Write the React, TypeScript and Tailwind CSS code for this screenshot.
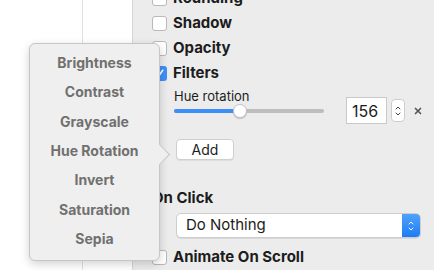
import { ChevronDown, ChevronUp, X } from 'lucide-react';

const filters = ['Brightness', 'Contrast', 'Grayscale', 'Hue Rotation', 'Invert', 'Saturation', 'Sepia'];

const Checkbox = ({ checked = false }: { checked?: boolean }) =>
  checked ? (
    <span className="flex h-[15px] w-[15px] shrink-0 items-center justify-center rounded-[3px] bg-[#3d8ff7]">
      <svg viewBox="0 0 12 12" className="h-[11px] w-[11px]">
        <path d="M2.5 6.5 L5 9 L9.5 2.5" fill="none" stroke="white" strokeWidth="1.8" strokeLinecap="round" strokeLinejoin="round" />
      </svg>
    </span>
  ) : (
    <span className="h-[15px] w-[15px] shrink-0 rounded-[3px] border border-[#b9b9b9] bg-white" />
  );

const CheckRow = ({ label, checked }: { label: string; checked?: boolean }) => (
  <div className="flex h-[25px] items-center gap-[6px]">
    <Checkbox checked={checked} />
    <span className="text-[15px] font-bold text-[#1c1c1c]">{label}</span>
  </div>
);

export default function App() {
  return (
    <div className="relative flex h-[270px] w-[434px] overflow-hidden bg-white font-['Inter',sans-serif]">
      <div className="flex w-[133px] shrink-0 border-r border-[#d6d6d6]">
        <div className="w-[83px] border-r border-[#e0e0e0]" />
      </div>

      <div className="flex-1 bg-[#ececec] pl-[19px]">
        <div className="-mt-[14px]">
          <CheckRow label="Rounding" />
          <CheckRow label="Shadow" />
          <CheckRow label="Opacity" />
          <CheckRow label="Filters" checked />
        </div>

        <div className="ml-[22px] mt-[2px]">
          <div className="text-[13px] leading-[16px] text-[#1c1c1c]">Hue rotation</div>
          <div className="-mt-[7px] flex h-[27px] items-center">
            <div className="relative h-[14px] w-[150px]">
              <div className="absolute left-0 right-0 top-[5px] h-[4px] rounded-full bg-[#bdbdbd]" />
              <div className="absolute left-0 top-[5px] h-[4px] w-[66px] rounded-full bg-[#3d8ff7]" />
              <div className="absolute left-[59px] top-0 h-[14px] w-[14px] rounded-full border border-[#c4c4c4] bg-white shadow-[0_1px_1px_rgba(0,0,0,0.2)]" />
            </div>
            <div className="ml-[22px] flex h-[27px] w-[41px] items-center border border-[#c9c9c9] bg-white pl-[5px] text-[16px] text-[#1c1c1c]">
              156
            </div>
            <div className="ml-[4px] flex h-[23px] w-[14px] flex-col items-center justify-center rounded-[4px] border border-[#cdcdcd] bg-white">
              <ChevronUp className="-mb-[2px] h-[8px] w-[8px] text-[#444]" strokeWidth={3} />
              <ChevronDown className="h-[8px] w-[8px] text-[#444]" strokeWidth={3} />
            </div>
            <X className="ml-[8px] h-[10px] w-[10px] text-[#555]" strokeWidth={4} />
          </div>
        </div>

        <button className="ml-[24px] mt-[15px] flex h-[21px] w-[58px] items-center justify-center rounded-[4px] border border-[#cfcfcf] bg-white text-[14px] text-[#1c1c1c] shadow-[0_1px_0_rgba(0,0,0,0.06)]">
          Add
        </button>

        <div className="mt-[28px] text-[15px] font-bold leading-[20px] text-[#1c1c1c]">On Click</div>

        <div className="ml-[24px] mt-[5px] flex h-[25px] w-[245px] overflow-hidden rounded-[5px] border border-[#cdcdcd] bg-white shadow-[0_1px_0_rgba(0,0,0,0.08)]">
          <span className="flex flex-1 items-center pl-[9px] text-[15px] text-[#1c1c1c]">Do Nothing</span>
          <span className="flex w-[18px] flex-col items-center justify-center bg-gradient-to-b from-[#4da2fb] to-[#1c7cf4]">
            <ChevronUp className="-mb-[2px] h-[8px] w-[8px] text-white" strokeWidth={3} />
            <ChevronDown className="h-[8px] w-[8px] text-white" strokeWidth={3} />
          </span>
        </div>

        <div className="mt-[7px]">
          <CheckRow label="Animate On Scroll" />
        </div>
      </div>

      <div className="absolute left-[29px] top-[43px] h-[218px] w-[131px] rounded-[6px] border border-[#c6c6c6] bg-[#efefef] shadow-[0_3px_10px_rgba(0,0,0,0.18)]">
        <div className="absolute right-[-8px] top-[103px] h-[15px] w-[15px] rotate-45 border-r border-t border-[#c6c6c6] bg-[#efefef]" />
        <div className="relative flex flex-col items-center pt-[4px]">
          {filters.map((f) => (
            <div key={f} className="flex h-[29.3px] items-center text-[14px] font-bold text-[#707070]">
              {f}
            </div>
          ))}
        </div>
      </div>
    </div>
  );
}
